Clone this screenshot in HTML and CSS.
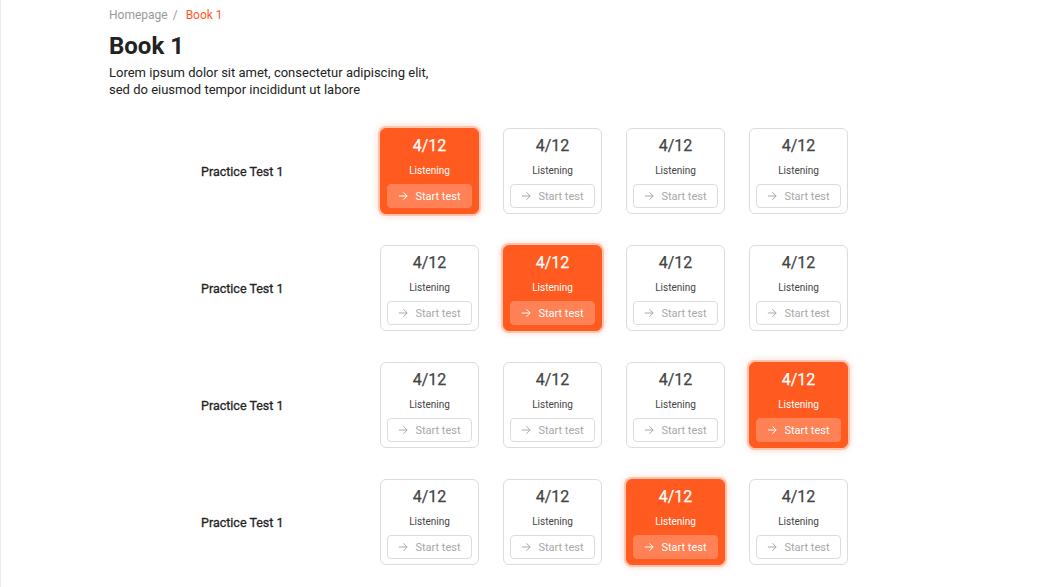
FILE: index.html
```html
<!DOCTYPE html>
<html lang="en">
<head>
<meta charset="utf-8">
<title>Book 1</title>
<link rel="stylesheet" href="styles.css">
</head>
<body>
<div class="page">
  <nav class="crumbs"><span class="crumb">Homepage</span><span class="sep">/</span><span class="crumb current">Book 1</span></nav>
  <h1 class="title">Book 1</h1>
  <p class="desc">Lorem ipsum dolor sit amet, consectetur adipiscing elit,<br>sed do eiusmod tempor incididunt ut labore</p>

  <div class="tests">
    <div class="row">
      <div class="label">Practice Test 1</div>
      <div class="cards">
        <div class="card active"><div class="score">4/12</div><div class="kind">Listening</div><button class="start"><svg class="arrow" viewBox="0 0 12 12"><path d="M1 6h10M6.5 1.5L11 6l-4.5 4.5"/></svg>Start test</button></div>
        <div class="card"><div class="score">4/12</div><div class="kind">Listening</div><button class="start"><svg class="arrow" viewBox="0 0 12 12"><path d="M1 6h10M6.5 1.5L11 6l-4.5 4.5"/></svg>Start test</button></div>
        <div class="card"><div class="score">4/12</div><div class="kind">Listening</div><button class="start"><svg class="arrow" viewBox="0 0 12 12"><path d="M1 6h10M6.5 1.5L11 6l-4.5 4.5"/></svg>Start test</button></div>
        <div class="card"><div class="score">4/12</div><div class="kind">Listening</div><button class="start"><svg class="arrow" viewBox="0 0 12 12"><path d="M1 6h10M6.5 1.5L11 6l-4.5 4.5"/></svg>Start test</button></div>
      </div>
    </div>
    <div class="row">
      <div class="label">Practice Test 1</div>
      <div class="cards">
        <div class="card"><div class="score">4/12</div><div class="kind">Listening</div><button class="start"><svg class="arrow" viewBox="0 0 12 12"><path d="M1 6h10M6.5 1.5L11 6l-4.5 4.5"/></svg>Start test</button></div>
        <div class="card active"><div class="score">4/12</div><div class="kind">Listening</div><button class="start"><svg class="arrow" viewBox="0 0 12 12"><path d="M1 6h10M6.5 1.5L11 6l-4.5 4.5"/></svg>Start test</button></div>
        <div class="card"><div class="score">4/12</div><div class="kind">Listening</div><button class="start"><svg class="arrow" viewBox="0 0 12 12"><path d="M1 6h10M6.5 1.5L11 6l-4.5 4.5"/></svg>Start test</button></div>
        <div class="card"><div class="score">4/12</div><div class="kind">Listening</div><button class="start"><svg class="arrow" viewBox="0 0 12 12"><path d="M1 6h10M6.5 1.5L11 6l-4.5 4.5"/></svg>Start test</button></div>
      </div>
    </div>
    <div class="row">
      <div class="label">Practice Test 1</div>
      <div class="cards">
        <div class="card"><div class="score">4/12</div><div class="kind">Listening</div><button class="start"><svg class="arrow" viewBox="0 0 12 12"><path d="M1 6h10M6.5 1.5L11 6l-4.5 4.5"/></svg>Start test</button></div>
        <div class="card"><div class="score">4/12</div><div class="kind">Listening</div><button class="start"><svg class="arrow" viewBox="0 0 12 12"><path d="M1 6h10M6.5 1.5L11 6l-4.5 4.5"/></svg>Start test</button></div>
        <div class="card"><div class="score">4/12</div><div class="kind">Listening</div><button class="start"><svg class="arrow" viewBox="0 0 12 12"><path d="M1 6h10M6.5 1.5L11 6l-4.5 4.5"/></svg>Start test</button></div>
        <div class="card active"><div class="score">4/12</div><div class="kind">Listening</div><button class="start"><svg class="arrow" viewBox="0 0 12 12"><path d="M1 6h10M6.5 1.5L11 6l-4.5 4.5"/></svg>Start test</button></div>
      </div>
    </div>
    <div class="row">
      <div class="label">Practice Test 1</div>
      <div class="cards">
        <div class="card"><div class="score">4/12</div><div class="kind">Listening</div><button class="start"><svg class="arrow" viewBox="0 0 12 12"><path d="M1 6h10M6.5 1.5L11 6l-4.5 4.5"/></svg>Start test</button></div>
        <div class="card"><div class="score">4/12</div><div class="kind">Listening</div><button class="start"><svg class="arrow" viewBox="0 0 12 12"><path d="M1 6h10M6.5 1.5L11 6l-4.5 4.5"/></svg>Start test</button></div>
        <div class="card active"><div class="score">4/12</div><div class="kind">Listening</div><button class="start"><svg class="arrow" viewBox="0 0 12 12"><path d="M1 6h10M6.5 1.5L11 6l-4.5 4.5"/></svg>Start test</button></div>
        <div class="card"><div class="score">4/12</div><div class="kind">Listening</div><button class="start"><svg class="arrow" viewBox="0 0 12 12"><path d="M1 6h10M6.5 1.5L11 6l-4.5 4.5"/></svg>Start test</button></div>
      </div>
    </div>
  </div>
</div>
</body>
</html>
```
FILE: styles.css
```css
* { box-sizing: border-box; }
html, body { margin: 0; padding: 0; background: #fff; }
body { font-family: Roboto, "Liberation Sans", sans-serif; color: #222; }

.page {
  min-height: 587px;
  border-left: 1px solid #ececec;
  padding: 8px 0 0 108px;
}

.crumbs { font-size: 12px; line-height: 14px; color: #999; display: flex; }
.sep { margin: 0 8px 0 5px; color: #999; }
.crumb.current { color: #ff5a1f; }

.title { margin: 10px 0 0; font-size: 24px; line-height: 28px; font-weight: 700; color: #222; }
.desc { margin: 4px 0 0; font-size: 13px; line-height: 17px; color: #222; }

.tests { margin-top: 30px; display: flex; flex-direction: column; gap: 31px; }
.row { display: flex; align-items: center; }
.label { width: 271px; padding-left: 92px; font-size: 12.5px; font-weight: 400; color: #222; -webkit-text-stroke: 0.3px #222; }
.cards { display: flex; gap: 24px; }

.card {
  width: 99px; height: 86px;
  border: 1px solid #dcdcdc; border-radius: 6px;
  padding: 7px 6px 4px;
  display: flex; flex-direction: column; align-items: center;
  background: #fff;
}
.score { font-size: 16px; line-height: 20px; color: #444; font-weight: 400; -webkit-text-stroke: 0.25px currentColor; }
.kind { margin-top: 9px; font-size: 10px; line-height: 12px; color: #444; }
.start {
  margin-top: 7px; width: 85px; height: 24px;
  border: 1px solid #dcdcdc; border-radius: 4px; background: #fff;
  font-family: inherit; font-size: 11px; color: #a8a8a8;
  display: flex; align-items: center; justify-content: center; gap: 7px; padding: 0;
}
.arrow { width: 10px; height: 10px; fill: none; stroke: currentColor; stroke-width: 1.2; }

.card.active {
  background: #ff5a1f; border-color: #ff5a1f;
  box-shadow: 0 0 0 2px #ffc4ad, 0 0 5px 3px rgba(255, 140, 100, 0.25);
}
.card.active .score, .card.active .kind { color: #fff; }
.card.active .start { background: #ff8156; border-color: #ff8156; color: #fff; }
```
